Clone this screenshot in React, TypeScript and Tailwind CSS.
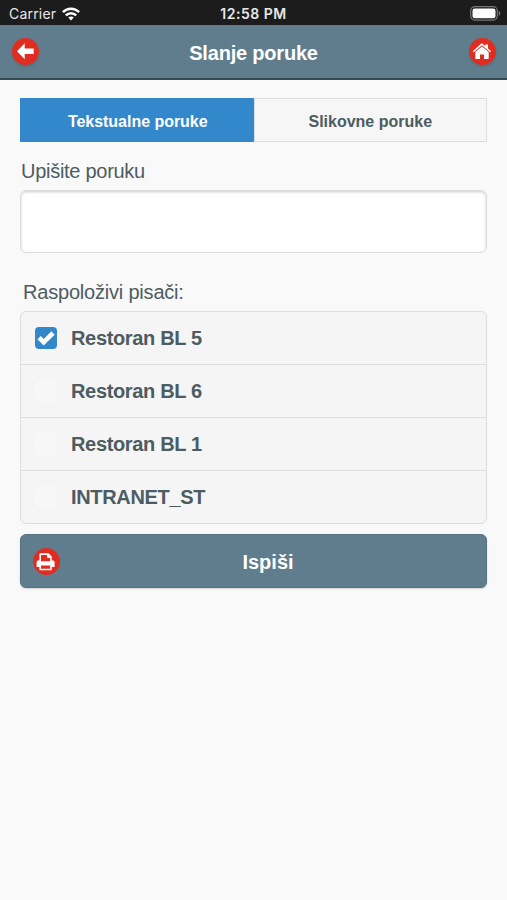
import React, { useState } from "react";

const printers = ["Restoran BL 5", "Restoran BL 6", "Restoran BL 1", "INTRANET_ST"];

function Wifi() {
  return (
    <svg className="ml-[6px] h-[14px] w-[18px]" viewBox="0 0 18 14" fill="none" stroke="#fff" strokeWidth="2.5">
      <path d="M0.9 5.2C5.4 0.6 12.6 0.6 17.1 5.2" />
      <path d="M3.8 8.4C6.8 5.4 11.2 5.4 14.2 8.4" />
      <path d="M6.2 10.5C7.8 9 10.2 9 11.8 10.5L9 13.4Z" fill="#fff" stroke="none" />
    </svg>
  );
}

function Battery() {
  return (
    <svg className="h-[15px] w-[31px]" viewBox="0 0 31 15">
      <rect x="0.7" y="0.7" width="26.6" height="13.4" rx="4" fill="none" stroke="#777" strokeWidth="1.2" />
      <rect x="2.5" y="2.5" width="23" height="9.8" rx="2.2" fill="#fff" />
      <path d="M28.7 5C30.8 5.6 30.8 9 28.7 9.8Z" fill="#777" />
    </svg>
  );
}

function Badge({ children }: { children: React.ReactNode }) {
  return (
    <span className="flex h-[27px] w-[27px] shrink-0 items-center justify-center rounded-full bg-[#e12c20]">
      <svg className="h-[27px] w-[27px]" viewBox="0 0 27 27" fill="#fff">
        {children}
      </svg>
    </span>
  );
}

export default function App() {
  const [tab, setTab] = useState(0);
  const [checked, setChecked] = useState([true, false, false, false]);

  return (
    <div className="h-[900px] w-full overflow-hidden bg-[#f9f9f9] font-['Liberation_Sans',Arial,sans-serif] text-[#4c5c61]">
      <div className="grid h-[25px] grid-cols-3 items-center bg-[#1c1c1c] pt-[2px] pr-[6px] pl-[9px] font-['Inter',sans-serif] text-[14px] text-[#e8e8e8]">
        <div className="flex items-center">
          <span className="tracking-[0.2px]">Carrier</span>
          <Wifi />
        </div>
        <span className="-ml-[3px] text-center font-semibold tracking-[0.5px] whitespace-nowrap">12:58 PM</span>
        <div className="flex justify-end">
          <Battery />
        </div>
      </div>

      <header className="flex h-[55px] items-center justify-between border-b-2 border-[#344951] bg-[#607d8d] px-[12px] text-white">
        <button className="rounded-full shadow-[0_2px_2px_#55707e]">
          <Badge>
            <path d="M5 13.3L12.7 5.3V10.6H21.7V16H12.7V21.3Z" />
          </Badge>
        </button>
        <h1 className="pt-[2px] text-[20px] font-bold tracking-[-0.2px]">Slanje poruke</h1>
        <button className="translate-x-px rounded-full shadow-[0_2px_2px_#55707e]">
          <Badge>
            <path d="M13 5.2L16.2 8V6.4H19V10.4L22.2 13.2L21.2 14.3L13 7.3L4.8 14.3L3.8 13.2L12 5.8Q12.5 5.2 13 5.2Z" />
            <path d="M13 8.4L19.7 14.1V20.2Q19.7 20.9 19 20.9H15V16.4H11V20.9H7Q6.3 20.9 6.3 20.2V14.1Z" />
          </Badge>
        </button>
      </header>

      <main className="px-5 pt-[18px]">
        <div className="grid h-[44px] grid-cols-2 text-[16px] font-bold">
          <button
            onClick={() => setTab(0)}
            className={"border pt-[3px] pl-[2px] tracking-[-0.03px] " + (tab === 0 ? "border-[#3388cc] bg-[#3388cc] text-white" : "border-[#dddddd] bg-[#f6f6f6]")}
          >
            Tekstualne poruke
          </button>
          <button
            onClick={() => setTab(1)}
            className={"border pt-[3px] " + (tab === 1 ? "border-[#3388cc] bg-[#3388cc] text-white" : "border-[#dddddd] bg-[#f6f6f6]")}
          >
            Slikovne poruke
          </button>
        </div>

        <label className="mt-[17px] block pl-px text-[20px] leading-6 tracking-[-0.28px]" htmlFor="message">
          Upišite poruku
        </label>
        <textarea
          id="message"
          className="mt-[7px] block h-[63px] w-full resize-none rounded-[6px] border border-[#dddddd] bg-white p-2 shadow-[inset_0_1px_3px_rgba(0,0,0,0.2)] outline-none"
        />

        <p className="mt-[27px] pl-[3px] text-[20px] leading-6 tracking-[-0.2px]">Raspoloživi pisači:</p>
        <div className="mt-[7px] overflow-hidden rounded-[6px] border border-[#dddddd] bg-[#f5f5f5]">
          {printers.map((name, i) => (
            <button
              key={name}
              onClick={() => setChecked(checked.map((c, j) => (j === i ? !c : c)))}
              className="flex h-[53px] w-full items-center border-b border-[#dddddd] pl-[14px] text-[20px] font-bold last:h-[52px] last:border-b-0"
            >
              <span
                className={
                  "flex h-[22px] w-[22px] items-center justify-center rounded-[4px] " +
                  (checked[i] ? "bg-[#3388cc]" : "bg-[#f7f7f7]")
                }
              >
                {checked[i] && (
                  <svg className="h-[22px] w-[22px]" viewBox="0 0 22 22" fill="none" stroke="#fff" strokeWidth="4.6">
                    <path d="M4.1 10.7L8.7 15.3L18 6" />
                  </svg>
                )}
              </span>
              <span className="ml-[14px] tracking-[-0.34px]">{name}</span>
            </button>
          ))}
        </div>

        <button className="mt-[10px] grid h-[54px] w-full grid-cols-[27px_1fr] items-center rounded-[6px] border border-[#557380] bg-[#607d8d] px-[12px] text-[20px] font-bold text-white shadow-[0_1px_2px_rgba(0,0,0,0.15)]">
          <Badge>
            <path
              fillRule="evenodd"
              d="M7.4 5.3H15.6L18.8 8.5V12.3Q21.6 12.3 21.6 14.6V18.9H18.8V22.3H6.4V18.9H3.6V14.6Q3.6 12.3 6.4 12.3V6.2Q6.4 5.3 7.4 5.3ZM8 6.9V13.2H17.2V10H14.2V6.9ZM8 17.4V20.7H17.2V17.4Z"
            />
          </Badge>
          <span className="pt-[2px] pl-[2px]">Ispiši</span>
        </button>
      </main>
    </div>
  );
}
